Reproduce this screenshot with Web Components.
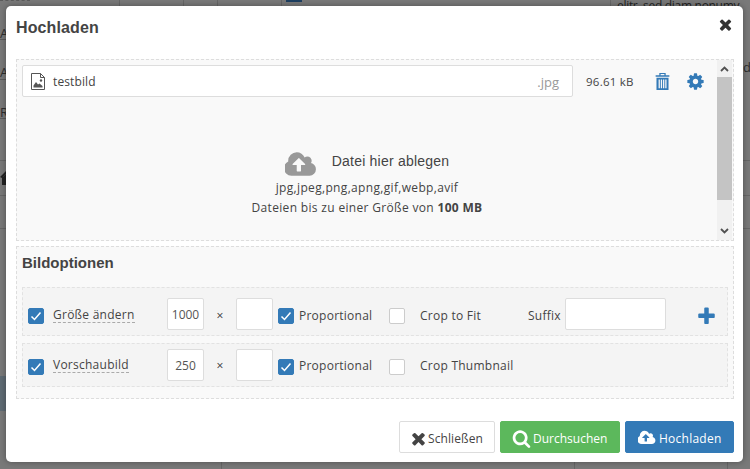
<!DOCTYPE html>
<html lang="de">
<head>
<meta charset="utf-8">
<title>Hochladen</title>
<style>
  html, body { margin: 0; height: 100%; }
  body { background: #797979; overflow: hidden; font-family: "Open Sans", sans-serif; }
</style>
</head>
<body>
<app-backdrop></app-backdrop>
<upload-modal heading="Hochladen">
  <file-row name="testbild" ext=".jpg" size="96.61 kB"></file-row>
  <option-row slot="options" first>
    <check-box checked></check-box>
    <dash-label>Größe ändern</dash-label>
    <text-field>1000</text-field>
    <span class="times">×</span>
    <text-field></text-field>
    <check-box checked style="grid-column: 7"></check-box>
    <span>Proportional</span>
    <check-box></check-box>
    <span>Crop to Fit</span>
    <span>Suffix</span>
    <text-field style="grid-column: 12 / span 2; width: 101px"></text-field>
    <fa-icon name="plus" size="21" style="color:#337ab7; grid-column: 14; width: 21px; margin: 4px 0 0 -2px"></fa-icon>
  </option-row>
  <option-row slot="options">
    <check-box checked></check-box>
    <dash-label>Vorschaubild</dash-label>
    <text-field>250</text-field>
    <span class="times">×</span>
    <text-field></text-field>
    <check-box checked style="grid-column: 7"></check-box>
    <span>Proportional</span>
    <check-box></check-box>
    <span style="grid-column: 10 / span 3">Crop Thumbnail</span>
  </option-row>
  <action-button slot="actions" kind="plain" icon="times" icon-size="19" style="width:96px; padding-left:9px; gap:0; letter-spacing:.1px">Schließen</action-button>
  <action-button slot="actions" kind="green" icon="search" icon-size="19" style="width:120px; padding-left:11px; gap:2px; letter-spacing:0">Durchsuchen</action-button>
  <action-button slot="actions" kind="blue" icon="cloud" icon-size="18" style="width:109px; padding-left:12px; gap:3px; letter-spacing:.25px">Hochladen</action-button>
</upload-modal>

<script>
const ICONS = {
  cog: ['0 0 1792 1792', 'M1152 896q0-106-75-181t-181-75-181 75-75 181 75 181 181 75 181-75 75-181zm512-109v222q0 12-8 23t-20 13l-185 28q-19 54-39 91 35 50 107 138 10 12 10 25t-9 23q-27 37-99 108t-94 71q-12 0-26-9l-138-108q-44 23-91 38-16 136-29 186-7 28-36 28h-222q-14 0-24.500-8.500t-11.500-21.500l-28-184q-49-16-90-37l-141 107q-10 9-25 9-14 0-25-11-126-114-165-168-7-10-7-23 0-12 8-23 15-21 51-66.500t54-70.500q-27-50-41-99l-183-27q-13-2-21-12.500t-8-23.500v-222q0-12 8-23t19-13l186-28q14-46 39-92-40-57-107-138-10-12-10-24 0-10 9-23 26-36 98.500-107.500t94.500-71.500q13 0 26 10l138 107q44-23 91-38 16-136 29-186 7-28 36-28h222q14 0 24.500 8.500t11.500 21.500l28 184q49 16 90 37l142-107q9-9 24-9 13 0 25 10 129 119 165 170 7 8 7 22 0 12-8 23-15 21-51 66.500t-54 70.500q26 50 41 98l183 28q13 2 21 12.500t8 23.500z'],
  cloud: ['0 0 1920 1792', 'M1216 864q0-14-9-23l-352-352q-9-9-23-9t-23 9l-351 351q-10 12-10 24 0 14 9 23t23 9h224v352q0 13 9.500 22.500t22.500 9.500h192q13 0 22.500-9.500t9.500-22.500v-352h224q13 0 22.500-9.500t9.500-22.500zm640 288q0 159-112.500 271.500t-271.500 112.500h-1088q-185 0-316.500-131.500t-131.500-316.500q0-130 70-240t188-165q-2-30-2-43 0-212 150-362t362-150q156 0 285.500 87t188.500 231q71-62 166-62 106 0 181 75t75 181q0 76-41 138 130 31 213.500 135.500t83.500 238.500z'],
  search: ['0 0 1792 1792', 'M1216 832q0-185-131.500-316.500t-316.500-131.500-316.500 131.500-131.500 316.500 131.500 316.500 316.500 131.500 316.500-131.500 131.500-316.500zm512 832q0 52-38 90t-90 38q-54 0-90-38l-343-342q-179 124-399 124-143 0-273.500-55.500t-225-150-150-225-55.500-273.500 55.500-273.500 150-225 225-150 273.500-55.500 273.500 55.500 225 150 150 225 55.500 273.500q0 220-124 399l343 343q37 37 37 90z'],
  times: ['0 0 1792 1792', 'M1490 1322q0 40-28 68l-136 136q-28 28-68 28t-68-28l-294-294-294 294q-28 28-68 28t-68-28l-136-136q-28-28-28-68t28-68l294-294-294-294q-28-28-28-68t28-68l136-136q28-28 68-28t68 28l294 294 294-294q28-28 68-28t68 28l136 136q28 28 28 68t-28 68l-294 294 294 294q28 28 28 68z'],
  plus: ['0 0 1792 1792', 'M1600 736v192q0 40-28 68t-68 28h-416v416q0 40-28 68t-68 28h-192q-40 0-68-28t-28-68v-416h-416q-40 0-68-28t-28-68v-192q0-40 28-68t68-28h416v-416q0-40 28-68t68-28h192q40 0 68 28t28 68v416h416q40 0 68 28t28 68z'],
  trash: ['0 0 16 18', 'M5 1h6v2h3.500v1.500h-13V3H5zM6.200 2v1h3.600V2zM2.300 5.500h11.400V17H2.300zM4.300 7v8.500h1.200V7zM6.400 7v8.500h1.200V7zM8.500 7v8.500h1.200V7zM10.600 7v8.500h1.200V7z']
};

class FaIcon extends HTMLElement {
  connectedCallback() {
    const [box, d] = ICONS[this.getAttribute('name')];
    const size = this.getAttribute('size') || 14;
    this.attachShadow({ mode: 'open' }).innerHTML = `
      <style>:host { display: inline-flex; align-items: center; flex: none; } svg { display: block; fill: currentColor; fill-rule: evenodd; }</style>
      <svg width="${size}" height="${size}" viewBox="${box}"><path d="${d}"/></svg>`;
  }
}

class AppBackdrop extends HTMLElement {
  connectedCallback() {
    const vlines = [[119, 0, 6], [183, 0, 6], [217, 0, 6], [281, 0, 6], [610, 0, 6], [221, 462, 7], [574, 462, 7], [727, 462, 7]];
    const hlines = [160, 195, 228];
    const dashes = [[0, 30, 0], [0, 6, 39], [0, 6, 79], [0, 6, 118]];
    this.attachShadow({ mode: 'open' }).innerHTML = `
      <style>
        :host { position: absolute; inset: 0; overflow: hidden; font: 13px "Open Sans", sans-serif; }
        i { position: absolute; background: #676767; }
        u { position: absolute; height: 0; border-top: 1px dashed #5c5c5c; }
        span { position: absolute; white-space: nowrap; color: #2e2e2e; line-height: 16px; }
        svg { position: absolute; left: 0; top: 170px; }
      </style>
      ${vlines.map(([x, y, h]) => `<i style="left:${x}px;top:${y}px;width:1px;height:${h}px"></i>`).join('')}
      ${hlines.map(y => `<i style="left:0;top:${y}px;width:100%;height:1px"></i>`).join('')}
      ${dashes.map(([x, w, y]) => `<u style="left:${x}px;top:${y}px;width:${w}px"></u>`).join('')}
      <i style="left:286px;top:0;width:16px;height:2px;background:#1d3f61"></i>
      <i style="left:0;top:376px;width:6px;height:35px;background:#5f6b74"></i>
      <svg width="6" height="15" viewBox="0 0 6 15"><path d="M0 7l6-6v3L3 7v7h3v1H2V8z" fill="#222"/><path d="M2 8l4-4v11H2z" fill="#222"/></svg>
      <span style="left:0;top:25px">Al</span>
      <span style="left:0;top:64px">Al</span>
      <span style="left:0;top:104px">Ra</span>
      <span style="left:743px;top:59px">d</span>
      <span style="left:617px;top:1px;font-size:12px;line-height:10px;letter-spacing:-.3px;color:#222">elitr, sed diam nonumy</span>
    `;
  }
}

class UploadModal extends HTMLElement {
  connectedCallback() {
    const heading = this.getAttribute('heading');
    this.attachShadow({ mode: 'open' }).innerHTML = `
      <style>
        :host {
          position: absolute; left: 6px; top: 6px; width: 737px; height: 456px;
          box-sizing: border-box; background: #fff; border-radius: 5px;
          box-shadow: 0 0 6px rgba(0,0,0,.35);
          display: flex; flex-direction: column;
          color: #444; font: 12px "Open Sans", sans-serif;
        }
        header { height: 53px; padding: 0 10px; display: flex; justify-content: space-between; box-sizing: border-box; }
        h4 { margin: 13px 0 0; font: bold 16px/18px "Liberation Sans", sans-serif; letter-spacing: .12px; color: #444; }
        fa-icon { color: #333; margin: 10px -1px 0 0; align-self: flex-start; }
        main { margin: 0 9px 0 10px; display: flex; flex-direction: column; gap: 5px; }
        .zone { height: 182px; box-sizing: border-box; border: 1px dashed #ddd; background: #f9f9f9; display: flex; }
        .list { flex: 1; padding: 5px; box-sizing: border-box; display: flex; flex-direction: column; min-width: 0; }
        .drop { flex: 1; text-align: center; color: #444; padding: 52px 0 0; letter-spacing: .33px; }
        .drop .title { display: flex; justify-content: center; align-items: center; gap: 15px; font: 14px/24px "Liberation Sans", sans-serif; letter-spacing: .22px; height: 24px; color: #444; }
        .drop .title fa-icon { color: #999; margin: 0; }
        .drop p { margin: 0; line-height: 20px; }
        .drop p.types { margin-top: 5px; }
        .drop b { font-weight: 700; }
        .bar { width: 15px; margin-right: 1px; background: #f1f1f1; display: flex; flex-direction: column; align-items: center; position: relative; }
        .bar .thumb { width: 100%; height: 123px; background: #c4c4c4; margin-top: 17px; flex: none; }
        .bar svg { position: absolute; }
        .options { height: 153px; box-sizing: border-box; border: 1px dashed #ddd; background: #f9f9f9; padding: 0 5px; display: flex; flex-direction: column; }
        h5 { margin: 7px 0 0; height: 33px; font: bold 15px/18px "Liberation Sans", sans-serif; color: #444; }
        .rows { display: flex; flex-direction: column; gap: 7px; }
        footer { margin-top: 22px; padding-right: 9px; display: flex; justify-content: flex-end; gap: 5px; }
      </style>
      <header><h4>${heading}</h4><fa-icon name="times" size="17"></fa-icon></header>
      <main>
        <section class="zone">
          <div class="list">
            <slot></slot>
            <div class="drop">
              <div class="title"><fa-icon name="cloud" size="32"></fa-icon><span>Datei hier ablegen</span></div>
              <p class="types">jpg,jpeg,png,apng,gif,webp,avif</p>
              <p>Dateien bis zu einer Größe von <b>100 MB</b></p>
            </div>
          </div>
          <div class="bar">
            <svg width="9" height="6" viewBox="0 0 9 6" style="top:6px"><path d="M1 5l3.500-3.500L8 5" fill="none" stroke="#505050" stroke-width="1.800"/></svg>
            <div class="thumb"></div>
            <svg width="9" height="6" viewBox="0 0 9 6" style="bottom:6px"><path d="M1 1l3.500 3.500L8 1" fill="none" stroke="#505050" stroke-width="1.800"/></svg>
          </div>
        </section>
        <section class="options">
          <h5>Bildoptionen</h5>
          <div class="rows"><slot name="options"></slot></div>
        </section>
      </main>
      <footer><slot name="actions"></slot></footer>`;
  }
}

class FileRow extends HTMLElement {
  connectedCallback() {
    const name = this.getAttribute('name'), ext = this.getAttribute('ext'), size = this.getAttribute('size');
    this.attachShadow({ mode: 'open' }).innerHTML = `
      <style>
        :host { display: flex; align-items: center; height: 32px; flex: none; }
        .box { width: 551px; height: 32px; box-sizing: border-box; border: 1px solid #ddd; border-radius: 2px; background: #fff; display: flex; align-items: center; padding: 0 13px 0 8px; }
        .box svg { margin-right: 8px; flex: none; }
        .name { flex: 1; color: #444; letter-spacing: .12px; margin-top: 1px; }
        .ext { color: #999; font-size: 13px; margin-top: 1px; }
        .size { margin-left: 13px; width: 67px; color: #444; font-size: 11.500px; letter-spacing: .25px; margin-top: 1px; }
        fa-icon { color: #337ab7; }
        .del { margin-right: 14px; }
      </style>
      <div class="box">
        <svg width="14" height="17" viewBox="0 0 14 17">
          <path d="M.5.5h9l4 4v12H.500z M9.500.5v4h4" fill="none" stroke="#555"/>
          <path d="M2.500 14.500v-2l2.500-3.500 2 2.500 1.500-1 3 2.500v1.500z" fill="#555"/>
          <circle cx="10" cy="7.500" r="1.200" fill="#555"/>
        </svg>
        <span class="name">${name}</span><span class="ext">${ext}</span>
      </div>
      <span class="size">${size}</span>
      <fa-icon class="del" name="trash" size="19"></fa-icon>
      <fa-icon name="cog" size="19"></fa-icon>`;
  }
}

class OptionRow extends HTMLElement {
  connectedCallback() {
    this.attachShadow({ mode: 'open' }).innerHTML = `
      <style>
        :host {
          display: grid; align-items: center; box-sizing: border-box; background: #f4f4f4;
          border: 1px dashed #e2e2e2; padding: 5px 0 5px 5px; height: 44px;
          grid-template-columns: 25px 114px 37px 32px 37px 5px 21px 90px 31px 108px 37px 101px 32px 16px;
          color: #444; font-size: 12px; letter-spacing: .25px;
        }
        :host([first]) { height: 49px; padding-top: 10px; }
        :host([first]) ::slotted(span), :host([first]) ::slotted(dash-label) { margin-top: 2px; }
        ::slotted(.times) { text-align: center; color: #333; }
      </style>
      <slot></slot>`;
  }
}

class CheckBox extends HTMLElement {
  connectedCallback() {
    const on = this.hasAttribute('checked');
    this.attachShadow({ mode: 'open' }).innerHTML = `
      <style>
        :host { display: block; width: 16px; height: 16px; box-sizing: border-box; margin-top: 4px; border-radius: 2px;
          background: ${on ? '#337ab7' : '#fff'}; border: 1px solid ${on ? '#337ab7' : '#ccc'}; }
        svg { display: block; }
      </style>
      ${on ? '<svg width="14" height="14" viewBox="0 0 14 14"><path d="M2.500 7.500l3 3 6-7" fill="none" stroke="#fff" stroke-width="1.500"/></svg>' : ''}`;
  }
}

class DashLabel extends HTMLElement {
  connectedCallback() {
    this.attachShadow({ mode: 'open' }).innerHTML = `
      <style>
        :host { justify-self: start; border-bottom: 1px dashed #aaa; line-height: 15px; }
      </style>
      <slot></slot>`;
  }
}

class TextField extends HTMLElement {
  connectedCallback() {
    this.attachShadow({ mode: 'open' }).innerHTML = `
      <style>
        :host { display: flex; align-items: center; justify-content: center; width: 37px; height: 32px; box-sizing: border-box;
          background: #fff; border: 1px solid #ddd; border-radius: 2px; color: #555; font-size: 12px; letter-spacing: 0; }
      </style>
      <slot></slot>`;
  }
}

class ActionButton extends HTMLElement {
  connectedCallback() {
    const kinds = {
      plain: 'background:#fff;border-color:#ddd;color:#444',
      green: 'background:#5cb85c;border-color:#5cb85c;color:#fff',
      blue: 'background:#337ab7;border-color:#337ab7;color:#fff'
    };
    this.attachShadow({ mode: 'open' }).innerHTML = `
      <style>
        :host { display: flex; align-items: center; height: 32px; box-sizing: border-box; padding-top: 2px;
          border: 1px solid; border-radius: 2px; font-size: 12px; ${kinds[this.getAttribute('kind')]} }
      </style>
      <fa-icon name="${this.getAttribute('icon')}" size="${this.getAttribute('icon-size')}"></fa-icon><slot></slot>`;
  }
}

customElements.define('fa-icon', FaIcon);
customElements.define('app-backdrop', AppBackdrop);
customElements.define('upload-modal', UploadModal);
customElements.define('file-row', FileRow);
customElements.define('option-row', OptionRow);
customElements.define('check-box', CheckBox);
customElements.define('dash-label', DashLabel);
customElements.define('text-field', TextField);
customElements.define('action-button', ActionButton);
</script>
</body>
</html>
